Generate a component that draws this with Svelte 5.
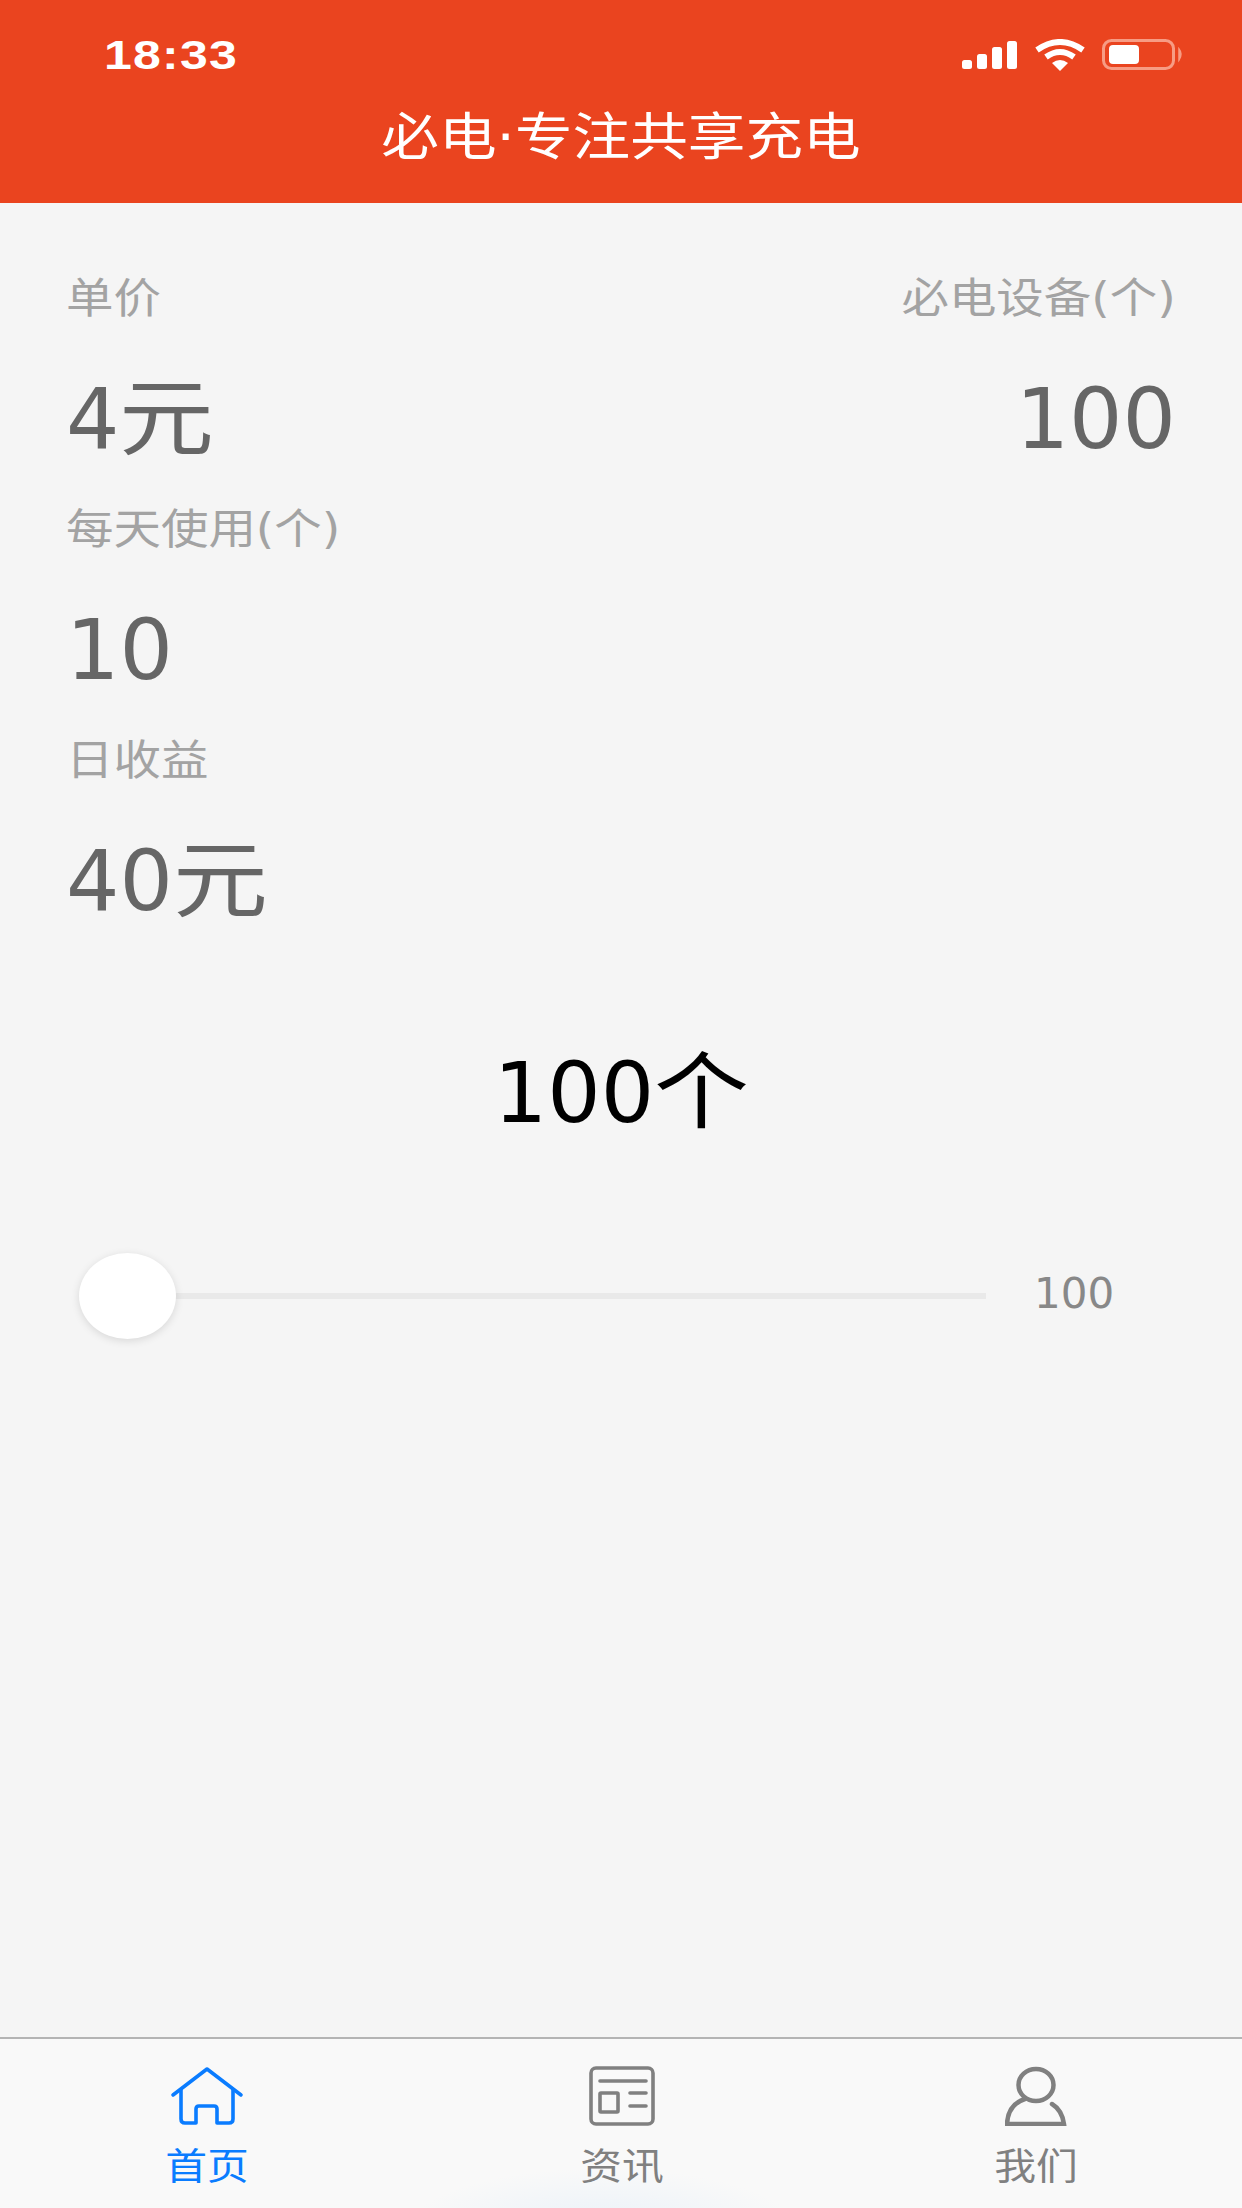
<script>
	let stats = [
		{ label: '每天使用(个)', value: '10', unit: '' },
		{ label: '日收益', value: '40', unit: '元' }
	];
	let tabs = [
		{ name: '首页', icon: 'home', active: true },
		{ name: '资讯', icon: 'news', active: false },
		{ name: '我们', icon: 'user', active: false }
	];
</script>

<div class="page">
	<header class="header">
		<div class="status">
			<span class="time">18:33</span>
			<div class="status-icons">
				<svg width="58" height="30" viewBox="0 0 58 30" fill="#fff">
					<rect x="2" y="20" width="10" height="9" rx="2.5" />
					<rect x="17" y="14" width="10" height="15" rx="2.5" />
					<rect x="32" y="7" width="10" height="22" rx="2.5" />
					<rect x="47" y="1" width="10" height="28" rx="2.5" />
				</svg>
				<svg width="50" height="32" viewBox="0 0 50 32" fill="none" stroke="#fff" stroke-width="6">
					<path d="M2 11 Q25 -5 48 11" />
					<path d="M11 18 Q25 8 39 18" />
					<path d="M17 24 L25 32 L33 24 Q25 18 17 24 Z" fill="#fff" stroke="none" />
				</svg>
				<svg width="82" height="32" viewBox="0 0 82 32" fill="none">
					<rect x="1.5" y="1.5" width="70" height="28" rx="8" stroke="#f79c84" stroke-width="3" />
					<rect x="7" y="6" width="30" height="19" rx="4" fill="#fff" />
					<path d="M77 10 Q81 15 77 21 Z" fill="#f79c84" stroke="#f79c84" stroke-width="1.5" />
				</svg>
			</div>
		</div>
		<h1 class="title">必电·专注共享充电</h1>
	</header>

	<main class="content">
		<div class="top-row">
			<div class="stat">
				<div class="label">单价</div>
				<div class="value">4<span class="unit">元</span></div>
			</div>
			<div class="stat right">
				<div class="label">必电设备(个)</div>
				<div class="value">100</div>
			</div>
		</div>
		{#each stats as s}
			<div class="stat">
				<div class="label">{s.label}</div>
				<div class="value">{s.value}{#if s.unit}<span class="unit">{s.unit}</span>{/if}</div>
			</div>
		{/each}

		<div class="count">100<span class="unit">个</span></div>

		<div class="slider">
			<div class="track">
				<div class="thumb"></div>
			</div>
			<span class="slider-value">100</span>
		</div>
	</main>

	<nav class="tabbar">
		<div class="glow"></div>
		{#each tabs as t}
			<div class="tab" class:active={t.active}>
				{#if t.icon === 'home'}
					<svg class="icon" width="76" height="60" viewBox="0 0 76 60" fill="none" stroke="currentColor" stroke-width="3.6" stroke-linecap="round" stroke-linejoin="round">
						<path d="M4 29 L38 3 L72 29" />
						<path d="M12 24 V53 Q12 57 16 57 H27 V43 Q27 40 30 40 H45 Q48 40 48 43 V57 H60 Q64 57 64 53 V24" />
					</svg>
				{:else if t.icon === 'news'}
					<svg class="icon" width="66" height="60" viewBox="0 0 66 60" fill="none" stroke="currentColor" stroke-width="3.6" stroke-linecap="round" stroke-linejoin="round">
						<rect x="2" y="2" width="62" height="56" rx="5" />
						<path d="M11 15 H57" />
						<rect x="11" y="27" width="18" height="19" rx="1" />
						<path d="M41 27 H57 M41 40 H57" />
					</svg>
				{:else}
					<svg class="icon" width="62" height="60" viewBox="0 0 62 60" fill="none" stroke="currentColor" stroke-width="4.5" stroke-linecap="round">
						<ellipse cx="31" cy="19" rx="17.5" ry="16" />
						<path d="M20 33 Q3 38 2 58 H59 Q57 44 47 38" />
					</svg>
				{/if}
				<span class="tab-name">{t.name}</span>
			</div>
		{/each}
	</nav>
</div>

<style>
	:global(body) {
		margin: 0;
	}

	.page {
		width: 1242px;
		height: 2208px;
		display: flex;
		flex-direction: column;
		background: #f5f5f5;
		font-family: 'DejaVu Sans', 'Noto Sans CJK SC', sans-serif;
		overflow: hidden;
	}

	.header {
		height: 203px;
		box-sizing: border-box;
		background: #ea441f;
		color: #fff;
		padding-top: 32px;
		flex-shrink: 0;
	}

	.status {
		display: flex;
		justify-content: space-between;
		align-items: center;
		padding: 0 1px 0 104px;
		height: 46px;
	}

	.time {
		font-family: 'Liberation Sans', sans-serif;
		font-size: 40px;
		font-weight: 700;
		letter-spacing: 1px;
		display: inline-block;
		transform: scaleX(1.25);
		transform-origin: left center;
	}

	.status-icons {
		display: flex;
		align-items: center;
		gap: 17px;
		padding-right: 57px;
	}

	.title {
		margin: 27px 0 0;
		text-align: center;
		font-size: 51px;
		font-weight: 400;
		line-height: 66px;
		transform: scaleX(1.13);
	}

	.content {
		flex: 1;
		padding: 66px 66px 0;
	}

	.top-row {
		display: flex;
		justify-content: space-between;
	}

	.stat {
		height: 231px;
	}

	.label {
		font-size: 42px;
		line-height: 60px;
		color: #a3a3a3;
		transform: scaleX(1.13);
		transform-origin: left center;
	}

	.stat.right {
		text-align: right;
	}

	.stat.right .label {
		transform-origin: right center;
	}

	.value {
		font-size: 84px;
		line-height: 100px;
		margin-top: 40px;
		color: #666;
	}

	/* the CJK unit runs wider than the digits next to it */
	.unit {
		display: inline-block;
		margin-right: 10px;
		transform: scaleX(1.13);
		transform-origin: left center;
	}

	.count {
		margin-top: 81px;
		text-align: center;
		font-size: 84px;
		line-height: 100px;
		color: #000;
	}

	.slider {
		display: flex;
		align-items: center;
		margin-top: 126px;
		padding-left: 13px;
	}

	.track {
		position: relative;
		width: 907px;
		height: 6px;
		background: #e9e9e9;
	}

	.thumb {
		position: absolute;
		left: 0;
		top: -40px;
		width: 97px;
		height: 86px;
		border-radius: 50%;
		background: #fff;
		box-shadow: 0 2px 8px rgba(0, 0, 0, 0.12);
	}

	.slider-value {
		margin: 0 0 4px 48px;
		font-size: 42px;
		color: #888;
	}

	.tabbar {
		position: relative;
		height: 171px;
		flex-shrink: 0;
		display: grid;
		grid-template-columns: 414px 416px 412px;
		background: #f9f9f9;
		border-top: 2px solid #b4b4b4;
		box-sizing: border-box;
		overflow: hidden;
	}

	.glow {
		position: absolute;
		left: 404px;
		bottom: -90px;
		width: 396px;
		height: 130px;
		border-radius: 50%;
		background: radial-gradient(closest-side, #e9f1f9, #f9f9f9);
	}

	.tab {
		position: relative;
		display: flex;
		flex-direction: column;
		align-items: center;
		padding-top: 27px;
		color: #808080;
	}

	.tab.active {
		color: #0a7cff;
	}

	.tab-name {
		margin-top: 13px;
		font-family: 'Noto Sans CJK SC', sans-serif;
		font-size: 37px;
		line-height: 50px;
		transform: scaleX(1.13);
	}
</style>
